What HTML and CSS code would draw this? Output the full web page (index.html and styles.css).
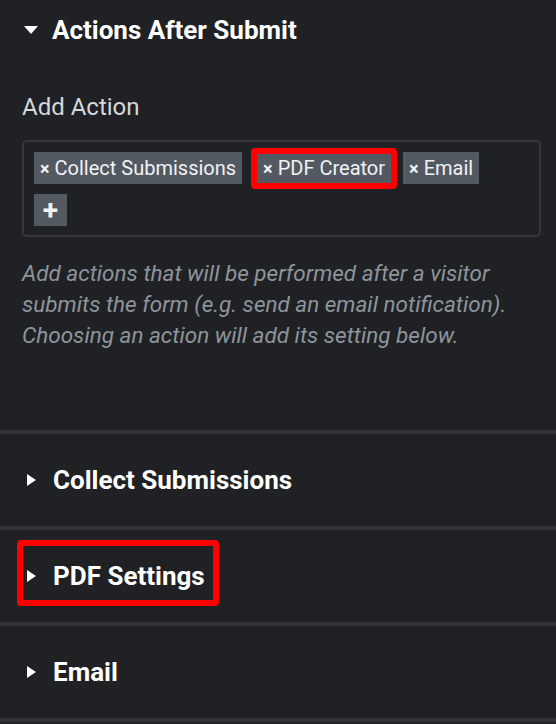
FILE: index.html
```html
<!DOCTYPE html>
<html lang="en">
<head>
    <meta charset="UTF-8">
    <meta name="viewport" content="width=device-width, initial-scale=1.0">
    <title>Actions After Submit</title>
    <link rel="stylesheet" href="styles.css">
</head>
<body>
    <div class="panel">
        <div class="section open">
            <div class="section-title">
                <span class="caret down"></span>
                Actions After Submit
            </div>
            <div class="control-label">Add Action</div>
            <div class="tags-box">
                <span class="tag"><span class="tag-x">×</span>Collect Submissions</span>
                <span class="tag marked"><span class="tag-x">×</span>PDF Creator</span>
                <span class="tag"><span class="tag-x">×</span>Email</span>
                <span class="tag add">+</span>
            </div>
            <p class="description">Add actions that will be performed after a visitor submits the form (e.g. send an email notification). Choosing an action will add its setting below.</p>
        </div>

        <div class="section">
            <div class="section-title">
                <span class="caret right"></span>
                Collect Submissions
            </div>
        </div>
        <div class="section">
            <div class="section-title marked">
                <span class="caret right"></span>
                PDF Settings
            </div>
        </div>
        <div class="section">
            <div class="section-title">
                <span class="caret right"></span>
                Email
            </div>
        </div>
    </div>
</body>
</html>
```

FILE: styles.css
```css
body {
    margin: 0;
    background: #1f2124;
    color: #ffffff;
    font-family: Roboto, "Liberation Sans", sans-serif;
}
.panel {
    border-bottom: 4px solid #323438;
}
.section {
    border-top: 4px solid #323438;
    height: 92px;
    display: flex;
    align-items: center;
    padding: 0 22px;
}
.section.open {
    border-top: none;
    height: 430px;
    display: block;
    padding: 15px 15px 0 22px;
    box-sizing: border-box;
}
.section-title {
    position: relative;
    display: flex;
    align-items: center;
    gap: 17px;
    font-size: 26px;
    font-weight: bold;
    line-height: 30px;
}
.caret {
    width: 0;
    height: 0;
}
.caret.down {
    margin-left: 2px;
    margin-right: -3px;
    border-left: 7.5px solid transparent;
    border-right: 7.5px solid transparent;
    border-top: 8px solid #ffffff;
}
.caret.right {
    margin-left: 5px;
    border-top: 6.5px solid transparent;
    border-bottom: 6.5px solid transparent;
    border-left: 9px solid #ffffff;
}
.control-label {
    margin-top: 47px;
    font-size: 24px;
    color: #d5d8dc;
    line-height: 30px;
}
.tags-box {
    margin-top: 18px;
    width: 519px;
    box-sizing: border-box;
    border: 2px solid #34373b;
    border-radius: 5px;
    padding: 10px 40px 9px 10px;
    display: flex;
    flex-wrap: wrap;
    align-items: center;
    gap: 10px 12px;
}
.tag {
    position: relative;
    display: inline-flex;
    align-items: center;
    height: 32px;
    padding: 0 6px;
    background: #525961;
    color: #f1f2f4;
    font-size: 20px;
}
.tag-x {
    font-size: 18px;
    font-weight: bold;
    margin-right: 5px;
}
.tag.add {
    width: 33px;
    padding: 0;
    justify-content: center;
    font-size: 28px;
    font-weight: bold;
}
.tag.marked {
    margin-left: 3px;
}
/* red annotation frames */
.marked::after {
    content: "";
    position: absolute;
    inset: -4px -6px -5px -6px;
    border: 6px solid #ff0000;
    border-radius: 4px;
}
.section-title.marked::after {
    inset: -21px -14px -15px -5px;
}
.description {
    margin: 21px 0 0;
    font-size: 22.5px;
    font-style: italic;
    line-height: 31px;
    color: #8e949c;
}
```
